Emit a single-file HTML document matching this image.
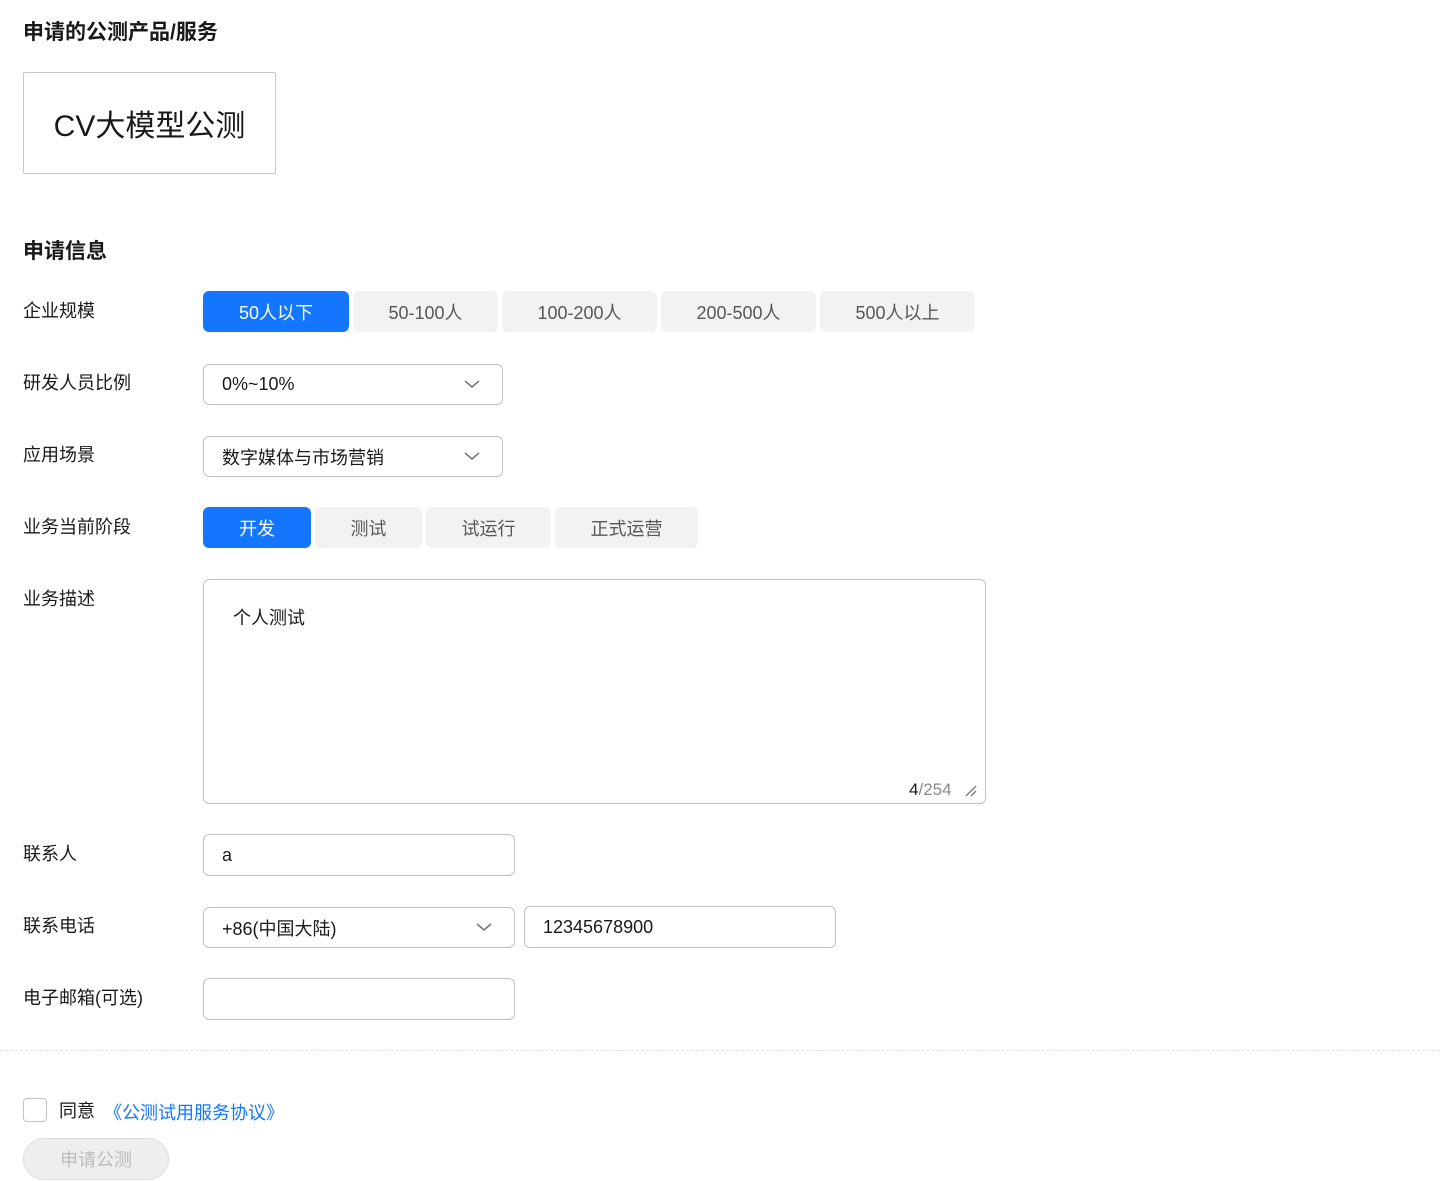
<!DOCTYPE html>
<html><head><meta charset="utf-8"><style>
*{margin:0;padding:0;box-sizing:border-box}
body{width:1440px;height:1181px;background:#fff;font-family:"Liberation Sans","Noto Sans CJK SC",sans-serif;color:#191919;position:relative;overflow:hidden}
.a{position:absolute}
.h{font-size:21px;font-weight:bold;left:23px}
.lbl{left:23px;font-size:18px;line-height:24px}
.seg{position:absolute;height:41px;border-radius:6px;background:#f2f2f2;color:#575757;font-size:18px;display:flex;align-items:center;justify-content:center}
.seg.on{background:#1476ff;color:#fff}
.box{position:absolute;border:1px solid #c2c2c2;border-radius:6px;background:#fff;font-size:18px;display:flex;align-items:center;padding-left:18px}
.chev{position:absolute;right:22px;top:13px}
</style></head><body>
<div class="a h" style="top:16px">申请的公测产品/服务</div>
<div class="a" style="left:23px;top:72px;width:253px;height:102px;border:1px solid #c8c8c8;border-radius:2px;display:flex;align-items:center;justify-content:center;font-size:30px;color:#191919">CV大模型公测</div>
<div class="a h" style="top:235px">申请信息</div>

<div class="a lbl" style="top:299px">企业规模</div>
<div class="seg on" style="left:203px;top:291px;width:146px">50人以下</div>
<div class="seg" style="left:353px;top:291px;width:145px">50-100人</div>
<div class="seg" style="left:502px;top:291px;width:155px">100-200人</div>
<div class="seg" style="left:661px;top:291px;width:155px">200-500人</div>
<div class="seg" style="left:820px;top:291px;width:155px">500人以上</div>

<div class="a lbl" style="top:371px">研发人员比例</div>
<div class="box" style="left:203px;top:364px;width:300px;height:41px">0%~10%<svg class="chev" width="16" height="12" viewBox="0 0 16 12"><path d="M1 3l7 6 7-6" fill="none" stroke="#777" stroke-width="1.6"/></svg></div>

<div class="a lbl" style="top:443px">应用场景</div>
<div class="box" style="left:203px;top:436px;width:300px;height:41px">数字媒体与市场营销<svg class="chev" width="16" height="12" viewBox="0 0 16 12"><path d="M1 3l7 6 7-6" fill="none" stroke="#777" stroke-width="1.6"/></svg></div>

<div class="a lbl" style="top:515px">业务当前阶段</div>
<div class="seg on" style="left:203px;top:507px;width:108px">开发</div>
<div class="seg" style="left:315px;top:507px;width:107px">测试</div>
<div class="seg" style="left:426px;top:507px;width:125px">试运行</div>
<div class="seg" style="left:555px;top:507px;width:143px">正式运营</div>

<div class="a lbl" style="top:587px">业务描述</div>
<div class="a" style="left:203px;top:579px;width:783px;height:225px;border:1px solid #c2c2c2;border-radius:6px"></div>
<div class="a" style="left:233px;top:604px;font-size:18px">个人测试</div>
<div class="a" style="left:909px;top:780px;font-size:17px;color:#8a8a8a"><span style="color:#191919">4</span>/254</div>
<svg class="a" style="left:964px;top:784px" width="14" height="14" viewBox="0 0 14 14"><path d="M2 12L12 2M7 12L12 7" stroke="#777" stroke-width="1.3"/></svg>

<div class="a lbl" style="top:842px">联系人</div>
<div class="box" style="left:203px;top:834px;width:312px;height:42px">a</div>

<div class="a lbl" style="top:914px">联系电话</div>
<div class="box" style="left:203px;top:907px;width:312px;height:41px">+86(中国大陆)<svg class="chev" width="16" height="12" viewBox="0 0 16 12"><path d="M1 3l7 6 7-6" fill="none" stroke="#777" stroke-width="1.6"/></svg></div>
<div class="box" style="left:524px;top:906px;width:312px;height:42px">12345678900</div>

<div class="a lbl" style="top:986px">电子邮箱(可选)</div>
<div class="box" style="left:203px;top:978px;width:312px;height:42px"></div>

<div class="a" style="left:0;top:1050px;width:1440px;border-top:1px dashed #dfdfdf"></div>

<div class="a" style="left:23px;top:1098px;width:24px;height:24px;border:1px solid #c2c2c2;border-radius:4px"></div>
<div class="a" style="left:59px;top:1097px;font-size:18px">同意</div>
<div class="a" style="left:104px;top:1099px;font-size:18px;color:#1476ff">《公测试用服务协议》</div>
<div class="a" style="left:23px;top:1138px;width:146px;height:42px;border:1px solid #dcdcdc;border-radius:21px;background:#eee;color:#bbb;font-size:18px;display:flex;align-items:center;justify-content:center">申请公测</div>
</body></html>
